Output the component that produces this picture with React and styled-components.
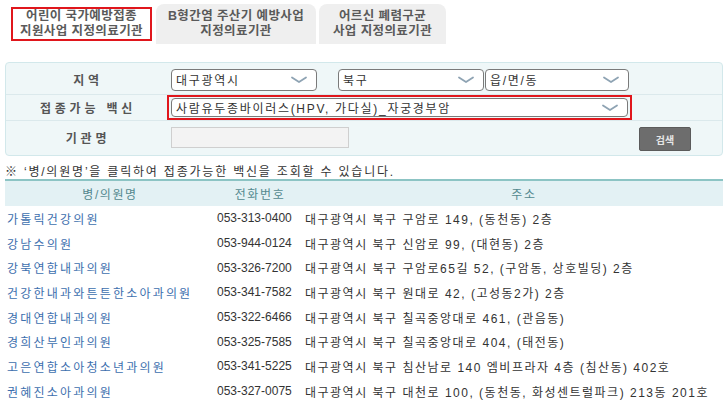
import React from 'react';
import styled, { createGlobalStyle } from 'styled-components';

const FONT = `"Liberation Sans", "Noto Sans CJK KR", sans-serif`;

const GlobalStyle = createGlobalStyle`
	html, body {
		margin: 0;
		padding: 0;
		background: #ffffff;
	}
	body {
		font-family: ${FONT};
		font-size: 12px;
		color: #333333;
	}
`;

const Page = styled.div`
	width: 728px;
	height: 401px;
	overflow: hidden;
	padding: 4px 5px 0 5px;
	box-sizing: border-box;
`;

const Tabs = styled.div`
	display: flex;
	gap: 3px;
	padding-left: 5px;
	height: 40px;
`;

const Tab = styled.div`
	display: flex;
	flex-direction: column;
	justify-content: center;
	align-items: center;
	box-sizing: border-box;
	width: ${(p) => p.$width}px;
	height: 40px;
	background: ${(p) => (p.$active ? '#ffffff' : '#efefef')};
	border-radius: 8px 8px 0 0;
	color: #5a5a5a;
	font-size: 12.5px;
	font-weight: bold;
	line-height: 15px;
	letter-spacing: 0.4px;
	text-align: center;
	white-space: nowrap;
`;

const ActiveMark = styled.div`
	box-sizing: border-box;
	width: 141px;
	height: 34px;
	border: 2px solid #e0161c;
	display: flex;
	flex-direction: column;
	justify-content: center;
	align-items: center;
`;

const Panel = styled.div`
	margin-top: 18px;
	background: #eff7f8;
	border: 1px solid #d2e8eb;
	border-radius: 4px;
	padding: 2px 0;
`;

const FormRow = styled.div`
	display: grid;
	grid-template-columns: 160px 1fr;
	align-items: center;
	height: ${(p) => p.$h}px;
	border-top: ${(p) => (p.$first ? 'none' : '1px solid #dbe9ec')};
`;

const Label = styled.div`
	text-align: center;
	color: #555555;
	font-weight: bold;
	font-size: 12px;
	letter-spacing: 3.8px;
	padding-left: 4px;
`;

const Fields = styled.div`
	display: flex;
	align-items: center;
	padding-left: ${(p) => p.$pad || 5}px;
`;

const Select = styled.div`
	box-sizing: border-box;
	display: flex;
	align-items: center;
	justify-content: space-between;
	width: ${(p) => p.$width}px;
	height: ${(p) => p.$h || 22}px;
	margin-right: ${(p) => p.$mr || 0}px;
	background: #ffffff;
	border: 1px solid #7a7a7a;
	border-radius: 4px;
	padding: 0 9px 0 4px;
	color: #333333;
	font-size: 12px;
	letter-spacing: 1.7px;
	white-space: nowrap;
`;

const RedFrame = styled.div`
	box-sizing: border-box;
	padding: 1px 2px;
	border: 2px solid #e0161c;
`;

const TextInput = styled.div`
	box-sizing: border-box;
	width: 178px;
	height: 21px;
	background: #f3f3f3;
	border: 1px solid #cfcfcf;
`;

const SearchButton = styled.div`
	margin-left: auto;
	margin-right: 31px;
	margin-top: 4px;
	width: 50px;
	height: 22px;
	display: flex;
	align-items: center;
	justify-content: center;
	background: #6d6d6d;
	border: 1px solid #5b5b5b;
	border-radius: 2px;
	color: #e6e6e6;
	font-size: 10px;
	font-weight: bold;
`;

const Notice = styled.div`
	margin-top: 9px;
	height: 14px;
	line-height: 14px;
	font-size: 12px;
	letter-spacing: 1.8px;
	color: #333333;
	white-space: nowrap;
`;

const Table = styled.div`
	border-top: 2px solid #8cc4c4;
`;

const Row = styled.div`
	display: grid;
	grid-template-columns: 210px 90px 1fr;
	align-items: center;
	height: ${(p) => (p.$head ? 25 : 24.7)}px;
	background: ${(p) => (p.$head ? '#e3f1f4' : 'transparent')};
	white-space: nowrap;
`;

const HeadCell = styled.div`
	text-align: center;
	color: #54898f;
	font-size: 12px;
	letter-spacing: 1.6px;
	padding-left: ${(p) => p.$shift || 0}px;
`;

const NameCell = styled.div`
	color: #3d6fae;
	font-size: 12px;
	letter-spacing: 2.2px;
	padding-left: 2px;
`;

const PhoneCell = styled.div`
	color: #333333;
	font-size: 12px;
	padding-left: 2px;
`;

const AddrCell = styled.div`
	color: #333333;
	font-size: 12px;
	letter-spacing: 1.5px;
`;

const Chevron = () => (
	<svg width="16" height="8" viewBox="0 0 16 8">
		<polyline points="1,1.5 8,6 15,1.5" fill="none" stroke="#8ea3b3" strokeWidth="1.8" strokeLinecap="round" strokeLinejoin="round" />
	</svg>
);

const rows = [
	['가톨릭건강의원', '053-313-0400', '대구광역시 북구 구암로 149, (동천동) 2층'],
	['강남수의원', '053-944-0124', '대구광역시 북구 신암로 99, (대현동) 2층'],
	['강북연합내과의원', '053-326-7200', '대구광역시 북구 구암로65길 52, (구암동, 상호빌딩) 2층'],
	['건강한내과와튼튼한소아과의원', '053-341-7582', '대구광역시 북구 원대로 42, (고성동2가) 2층'],
	['경대연합내과의원', '053-322-6466', '대구광역시 북구 칠곡중앙대로 461, (관음동)'],
	['경희산부인과의원', '053-325-7585', '대구광역시 북구 칠곡중앙대로 404, (태전동)'],
	['고은연합소아청소년과의원', '053-341-5225', '대구광역시 북구 침산남로 140 엠비프라자 4층 (침산동) 402호'],
	['권혜진소아과의원', '053-327-0075', '대구광역시 북구 대천로 100, (동천동, 화성센트럴파크) 213동 201호'],
];

const App = () => (
	<Page>
		<GlobalStyle />
		<Tabs>
			<Tab $active $width={143}>
				<ActiveMark>
					<span>어린이 국가예방접종</span>
					<span>지원사업 지정의료기관</span>
				</ActiveMark>
			</Tab>
			<Tab $width={160}>
				<span>B형간염 주산기 예방사업</span>
				<span>지정의료기관</span>
			</Tab>
			<Tab $width={127}>
				<span>어르신 폐렴구균</span>
				<span>사업 지정의료기관</span>
			</Tab>
		</Tabs>

		<Panel>
			<FormRow $first $h={29}>
				<Label>지역</Label>
				<Fields>
					<Select $width={146} $mr={21}>
						<span>대구광역시</span>
						<Chevron />
					</Select>
					<Select $width={146} $mr={1}>
						<span>북구</span>
						<Chevron />
					</Select>
					<Select $width={144}>
						<span>읍/면/동</span>
						<Chevron />
					</Select>
				</Fields>
			</FormRow>
			<FormRow $h={25}>
				<Label>접종가능 백신</Label>
				<Fields $pad={1}>
					<RedFrame>
						<Select $width={457} $h={19}>
							<span>사람유두종바이러스(HPV, 가다실)_자궁경부암</span>
							<Chevron />
						</Select>
					</RedFrame>
				</Fields>
			</FormRow>
			<FormRow $h={32}>
				<Label>기관명</Label>
				<Fields>
					<TextInput />
					<SearchButton>검색</SearchButton>
				</Fields>
			</FormRow>
		</Panel>

		<Notice>※ ‘병/의원명’을 클릭하여 접종가능한 백신을 조회할 수 있습니다.</Notice>

		<Table>
			<Row $head>
				<HeadCell>병/의원명</HeadCell>
				<HeadCell>전화번호</HeadCell>
				<HeadCell $shift={20}>주소</HeadCell>
			</Row>
			{rows.map(([name, phone, addr]) => (
				<Row key={name}>
					<NameCell>{name}</NameCell>
					<PhoneCell>{phone}</PhoneCell>
					<AddrCell>{addr}</AddrCell>
				</Row>
			))}
		</Table>
	</Page>
);

export default App;
